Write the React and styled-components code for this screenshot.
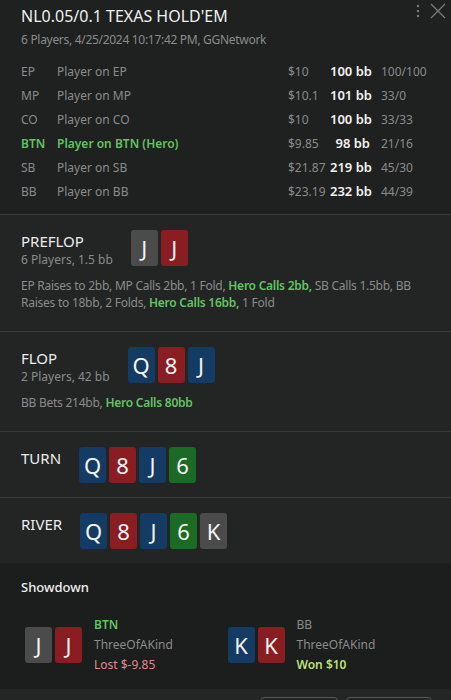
import React from 'react';
import styled, { createGlobalStyle } from 'styled-components';

const GlobalStyle = createGlobalStyle`
  html, body {
    margin: 0;
    padding: 0;
    background: #1f2020;
  }
  body {
    font-family: "Noto Sans", "Open Sans", sans-serif;
    color: #e8e8e8;
    width: 451px;
    height: 700px;
    overflow: hidden;
  }
`;

const colors = {
  gray: '#4b4b4b',
  red: '#8a1d22',
  blue: '#143b63',
  green: '#1b6a25',
  hero: '#63c263',
  muted: '#8b8b8b',
  line: '#373a38',
};

const Panel = styled.div`
  display: flex;
  flex-direction: column;
  width: 451px;
  height: 700px;
  overflow: hidden;
`;

const Header = styled.div`
  position: relative;
  padding: 5px 21px 11px 21px;
  background: #1f2020;
`;

const Title = styled.div`
  font-size: 16px;
  line-height: 22px;
  color: #f0f0f0;
`;

const Subtitle = styled.div`
  font-size: 12px;
  line-height: 18px;
  letter-spacing: -0.3px;
  color: ${colors.muted};
  margin: 4px 0 10px 0;
`;

const Corner = styled.div`
  position: absolute;
  top: 1px;
  right: 3px;
  display: flex;
  align-items: center;
  gap: 7px;
  color: #7a7a7a;
`;

const PlayerGrid = styled.div`
  display: grid;
  grid-template-columns: 36px 231px 42px 40px 1fr;
  grid-auto-rows: 24px;
  align-items: center;
  font-size: 12px;
`;

const Cell = styled.div`
  color: ${p => (p.$hero ? colors.hero : colors.muted)};
  font-weight: ${p => (p.$hero ? 600 : 400)};
  white-space: nowrap;
`;

const BbCell = styled.div`
  color: #f2f2f2;
  font-weight: 600;
  font-size: 13px;
  text-align: right;
  white-space: nowrap;
`;

const StatCell = styled.div`
  color: ${colors.muted};
  padding-left: 11px;
  white-space: nowrap;
`;

const Street = styled.div`
  background: #222524;
  border-top: 1px solid ${colors.line};
  padding: 15px 21px ${p => (p.$tall ? '20px' : '14px')} 21px;
`;

const StreetTop = styled.div`
  display: flex;
  align-items: flex-start;
  gap: 18px;
`;

const StreetName = styled.div`
  display: flex;
  flex-direction: column;
  padding-top: 1px;
`;

const StreetTitle = styled.div`
  font-size: 15px;
  line-height: 20px;
  color: #ececec;
`;

const StreetSub = styled.div`
  font-size: 12px;
  line-height: 17px;
  color: ${colors.muted};
`;

const Cards = styled.div`
  display: flex;
  gap: 3px;
`;

const Card = styled.div`
  width: 27px;
  height: 36px;
  border-radius: 3px;
  background: ${p => colors[p.$suit]};
  color: #f4f4f4;
  font-size: 22px;
  line-height: 36px;
  text-align: center;
`;

const Actions = styled.div`
  margin-top: 9px;
  font-size: 12px;
  line-height: 17px;
  letter-spacing: -0.25px;
  color: ${colors.muted};
`;

const HeroAct = styled.span`
  color: ${colors.hero};
  font-weight: 600;
`;

const Showdown = styled.div`
  background: #1c1d1d;
  padding: 15px 21px 14px 21px;
`;

const ShowTitle = styled.div`
  font-size: 13px;
  line-height: 18px;
  font-weight: 500;
  color: #f0f0f0;
`;

const Hands = styled.div`
  display: flex;
  margin-top: 19px;
  padding-left: 4px;
`;

const Hand = styled.div`
  display: flex;
  align-items: center;
  gap: 12px;
  width: 205px;
`;

const HandInfo = styled.div`
  display: flex;
  flex-direction: column;
  font-size: 12px;
  line-height: 20px;
`;

const InfoLine = styled.div`
  color: ${p => p.$color || colors.muted};
  font-weight: ${p => (p.$bold ? 600 : 400)};
`;

const BottomBar = styled.div`
  flex: 1;
  background: #232624;
  display: flex;
  justify-content: flex-end;
  gap: 8px;
  padding: 8px 19px 0 0;
`;

const BarButton = styled.div`
  width: ${p => p.$w}px;
  height: 30px;
  border: 1px solid #555856;
  border-radius: 4px;
  box-sizing: border-box;
`;

const players = [
  { pos: 'EP', name: 'Player on EP', money: '$10', bb: '100 bb', stat: '100/100' },
  { pos: 'MP', name: 'Player on MP', money: '$10.1', bb: '101 bb', stat: '33/0' },
  { pos: 'CO', name: 'Player on CO', money: '$10', bb: '100 bb', stat: '33/33' },
  { pos: 'BTN', name: 'Player on BTN (Hero)', money: '$9.85', bb: '98 bb', stat: '21/16', hero: true },
  { pos: 'SB', name: 'Player on SB', money: '$21.87', bb: '219 bb', stat: '45/30' },
  { pos: 'BB', name: 'Player on BB', money: '$23.19', bb: '232 bb', stat: '44/39' },
];

const board = [
  ['Q', 'blue'],
  ['8', 'red'],
  ['J', 'blue'],
  ['6', 'green'],
  ['K', 'gray'],
];

const CardRow = ({ cards }) => (
  <Cards>
    {cards.map(([rank, suit], i) => (
      <Card key={i} $suit={suit}>{rank}</Card>
    ))}
  </Cards>
);

const App = () => (
  <Panel>
    <GlobalStyle />
    <Header>
      <Title>NL0.05/0.1 TEXAS HOLD'EM</Title>
      <Subtitle>6 Players, 4/25/2024 10:17:42 PM, GGNetwork</Subtitle>
      <Corner>
        <svg width="6" height="20" viewBox="0 0 6 20">
          <circle cx="3" cy="5" r="1.2" fill="#7a7a7a" />
          <circle cx="3" cy="10" r="1.2" fill="#7a7a7a" />
          <circle cx="3" cy="15" r="1.2" fill="#7a7a7a" />
        </svg>
        <svg width="20" height="20" viewBox="0 0 20 20">
          <path d="M3 3 L17 17 M17 3 L3 17" stroke="#7a7a7a" strokeWidth="1.3" />
        </svg>
      </Corner>
      <PlayerGrid>
        {players.map(p => (
          <React.Fragment key={p.pos}>
            <Cell $hero={p.hero}>{p.pos}</Cell>
            <Cell $hero={p.hero}>{p.name}</Cell>
            <Cell>{p.money}</Cell>
            <BbCell>{p.bb}</BbCell>
            <StatCell>{p.stat}</StatCell>
          </React.Fragment>
        ))}
      </PlayerGrid>
    </Header>

    <Street $tall>
      <StreetTop>
        <StreetName>
          <StreetTitle>PREFLOP</StreetTitle>
          <StreetSub>6 Players, 1.5 bb</StreetSub>
        </StreetName>
        <CardRow cards={[['J', 'gray'], ['J', 'red']]} />
      </StreetTop>
      <Actions>
        EP Raises to 2bb, MP Calls 2bb, 1 Fold, <HeroAct>Hero Calls 2bb,</HeroAct> SB Calls 1.5bb, BB
        Raises to 18bb, 2 Folds, <HeroAct>Hero Calls 16bb,</HeroAct> 1 Fold
      </Actions>
    </Street>

    <Street $tall>
      <StreetTop>
        <StreetName>
          <StreetTitle>FLOP</StreetTitle>
          <StreetSub>2 Players, 42 bb</StreetSub>
        </StreetName>
        <CardRow cards={board.slice(0, 3)} />
      </StreetTop>
      <Actions>
        BB Bets 214bb, <HeroAct>Hero Calls 80bb</HeroAct>
      </Actions>
    </Street>

    <Street>
      <StreetTop>
        <StreetName>
          <StreetTitle>TURN</StreetTitle>
        </StreetName>
        <CardRow cards={board.slice(0, 4)} />
      </StreetTop>
    </Street>

    <Street>
      <StreetTop>
        <StreetName>
          <StreetTitle>RIVER</StreetTitle>
        </StreetName>
        <CardRow cards={board} />
      </StreetTop>
    </Street>

    <Showdown>
      <ShowTitle>Showdown</ShowTitle>
      <Hands>
        <Hand>
          <CardRow cards={[['J', 'gray'], ['J', 'red']]} />
          <HandInfo>
            <InfoLine $color={colors.hero} $bold>BTN</InfoLine>
            <InfoLine>ThreeOfAKind</InfoLine>
            <InfoLine $color="#e08a8a">Lost $-9.85</InfoLine>
          </HandInfo>
        </Hand>
        <Hand>
          <CardRow cards={[['K', 'blue'], ['K', 'red']]} />
          <HandInfo>
            <InfoLine>BB</InfoLine>
            <InfoLine>ThreeOfAKind</InfoLine>
            <InfoLine $color="#bfe372" $bold>Won $10</InfoLine>
          </HandInfo>
        </Hand>
      </Hands>
    </Showdown>

    <BottomBar>
      <BarButton $w={78} />
      <BarButton $w={86} />
    </BottomBar>
  </Panel>
);

export default App;
